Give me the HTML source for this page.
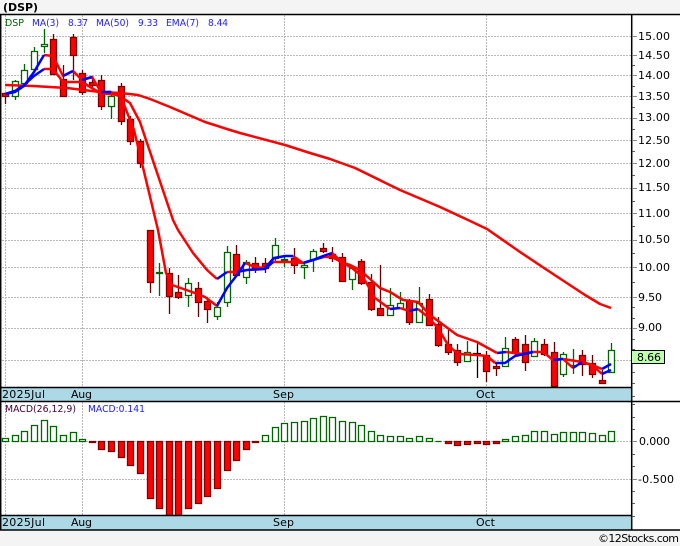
<!DOCTYPE html>
<html><head><meta charset="utf-8"><style>
html,body{margin:0;padding:0;background:#f4f4f4;width:680px;height:546px;overflow:hidden}
svg{display:block}
text{font-family:"DejaVu Sans",sans-serif;font-size:11px;fill:#000}
</style></head><body>
<svg width="680" height="546" viewBox="0 0 680 546" xmlns="http://www.w3.org/2000/svg">
<rect width="680" height="546" fill="#f4f4f4"/>
<rect x="0" y="14" width="680" height="516" fill="#fff"/>
<text x="3" y="11" style="font-size:11px;font-weight:bold" textLength="35" lengthAdjust="spacingAndGlyphs">(DSP)</text>

<!-- grid -->
<g stroke="#b8b8b8" stroke-width="1" stroke-dasharray="2 1" fill="none">
<path d="M2 36.5H636M2 55.5H636M2 75.5H636M2 96.5H636M2 118.5H636M2 140.5H636M2 163.5H636M2 188.5H636M2 213.5H636M2 240.5H636M2 267.5H636M2 297.5H636M2 328.5H636M2 360.5H636"/>
<path d="M2 441.5H636M2 479.5H636"/>
<path d="M5.5 15V387M82.5 15V387M284.5 15V387M486.5 15V387"/>
<path d="M5.5 402V515M82.5 402V515M284.5 402V515M486.5 402V515"/>
</g>

<!-- green wicks -->
<path fill="none" stroke="#006400" stroke-width="1.3" d="M15.5 80V100M24.5 64V83M34.5 47V69M44.5 29V53M111.5 93V119M159.5 263V296M188.5 278V307M217.5 302V320M227.5 246V307M246.5 260V284M275.5 238V263M284.5 256V267M304.5 262V279M313.5 249V272M352.5 267V290M390.5 288V316M400.5 292V308M419.5 287V322M467.5 341V362M505.5 337V366M534.5 338V357M563.5 352V377M573.5 349V374M611.5 343V373"/>
<!-- green bodies -->
<path fill="#fff" stroke="#006400" stroke-width="1.3" d="M12.5 81.5h6V96.5h-6zM21.5 70.5h6V83.5h-6zM31.5 51.5h6V69.5h-6zM41.5 44.5h6V46.5h-6zM108.5 96.5h6V106.5h-6zM156.5 272.5h6V273.5h-6zM185.5 283.5h6V295.5h-6zM214.5 307.5h6V316.5h-6zM224.5 252.5h6V302.5h-6zM243.5 262.5h6V277.5h-6zM272.5 245.5h6V258.5h-6zM281.5 259.5h6V260.5h-6zM301.5 265.5h6V267.5h-6zM310.5 251.5h6V259.5h-6zM349.5 268.5h6V279.5h-6zM387.5 305.5h6V315.5h-6zM397.5 303.5h6V308.5h-6zM416.5 303.5h6V322.5h-6zM464.5 352.5h6V361.5h-6zM502.5 348.5h6V366.5h-6zM531.5 341.5h6V356.5h-6zM560.5 354.5h6V374.5h-6zM570.5 365.5h6V366.5h-6zM608.5 350.5h6V372.5h-6z"/>
<!-- red wicks -->
<path fill="none" stroke="#660000" stroke-width="1.3" d="M5.5 93V104M53.5 34V74M63.5 65V97M73.5 34V80M82.5 70V95M92.5 76V87M101.5 75V110M121.5 83V125M130.5 116V145M140.5 139V168M150.5 230V293M169.5 268V314M178.5 275V299M198.5 282V317M207.5 297V323M236.5 245V275M255.5 257V273M265.5 258V273M294.5 248V274M323.5 243V253M332.5 247V262M342.5 253V282M361.5 259V285M371.5 274V311M380.5 265V316M409.5 299V325M429.5 294V325M438.5 317V347M448.5 330V355M457.5 344V366M486.5 351V382M496.5 362V376M515.5 337V355M525.5 335V371M544.5 339V356M554.5 342V387M582.5 350V376M592.5 355V378M602.5 370V383"/>
<!-- red bodies -->
<path fill="#f00" stroke="#800000" stroke-width="1.3" d="M2.5 93.5h6V96.5h-6zM50.5 39.5h6V74.5h-6zM60.5 79.5h6V96.5h-6zM70.5 37.5h6V55.5h-6zM79.5 73.5h6V92.5h-6zM89.5 82.5h6V85.5h-6zM98.5 80.5h6V106.5h-6zM118.5 86.5h6V121.5h-6zM127.5 119.5h6V141.5h-6zM137.5 141.5h6V163.5h-6zM147.5 230.5h6V282.5h-6zM166.5 273.5h6V296.5h-6zM175.5 292.5h6V297.5h-6zM195.5 288.5h6V302.5h-6zM204.5 301.5h6V309.5h-6zM233.5 254.5h6V275.5h-6zM252.5 263.5h6V268.5h-6zM262.5 263.5h6V268.5h-6zM291.5 258.5h6V265.5h-6zM320.5 248.5h6V251.5h-6zM329.5 254.5h6V258.5h-6zM339.5 257.5h6V281.5h-6zM358.5 261.5h6V283.5h-6zM368.5 282.5h6V309.5h-6zM377.5 308.5h6V315.5h-6zM406.5 301.5h6V322.5h-6zM426.5 299.5h6V325.5h-6zM435.5 324.5h6V345.5h-6zM445.5 344.5h6V352.5h-6zM454.5 350.5h6V362.5h-6zM483.5 355.5h6V371.5h-6zM493.5 366.5h6V368.5h-6zM512.5 339.5h6V353.5h-6zM522.5 344.5h6V362.5h-6zM541.5 344.5h6V354.5h-6zM551.5 352.5h6V386.5h-6zM579.5 355.5h6V364.5h-6zM589.5 363.5h6V374.5h-6zM599.5 380.5h6V383.5h-6z"/>
<!-- doji -->
<path fill="none" stroke="#000" stroke-width="1.3" d="M477.5 343V378M473 353.5H481"/>

<!-- MA50 -->
<polyline fill="none" stroke="#f00" stroke-width="2.5" stroke-linejoin="round" points="5,85 33,86 67,88 100,92 120,93 138,95 150,99 170,107 205,122 230,130 240,133 285,145 310,153 330,159 355,168 400,190 440,207 468,220 487,229 520,252 550,272 585,295 600,304 611,308"/>
<!-- red parts of MA3 + EMA -->
<g fill="none" stroke="#f00" stroke-width="2.5" stroke-linejoin="round">
<polyline points="44,55 53,56 63,76 73,71 82,80 92,77 101,92 111,92 121,97 134,130 158,230 166,273 172,285 192,292 205,297 217,306"/>
<polyline points="245,263 255,267 265,268 274,258"/>
<polyline points="293,256 303,263"/>
<polyline points="332,253 342,262 352,268 363,277 375,298 390,309"/>
<polyline points="400,308 409,311"/>
<polyline points="418,309 428,317 438,328 448,345 458,354 477,355 487,356 495,363"/>
<polyline points="533,352 543,352 553,360"/>
<polyline points="563,359 573,368"/>
<polyline points="582,362 592,365 602,374"/>
<polyline points="44,69 53,69 63,82 82,82 100,93 118,95 130,103 140,122 146,140 173,220 178,230 193,253 207,270 217,279"/>
<polyline points="227,272 237,272"/>
<polyline points="273,262 285,262 293,262 303,263"/>
<polyline points="323,257 332,257 343,263 350,265 360,270 380,288 390,292 403,300 418,302 430,315 457,335 477,342 497,353"/>
<polyline points="506,352 523,354"/>
<polyline points="563,359 582,362 592,365 602,369"/>
</g>
<!-- blue parts -->
<g fill="none" stroke="#00f" stroke-width="2.5" stroke-linejoin="round">
<polyline points="5,94 15,92 24,86 34,72 44,55"/>
<polyline points="63,76 73,71"/>
<polyline points="82,80 92,77"/>
<polyline points="101,92 111,92"/>
<polyline points="217,306 227,288 237,275 245,263"/>
<polyline points="265,268 274,258 285,256 293,256"/>
<polyline points="303,263 313,260 323,256 332,253"/>
<polyline points="390,309 400,308"/>
<polyline points="409,311 418,309"/>
<polyline points="495,363 505,363 515,356 524,354 533,352"/>
<polyline points="553,360 563,359"/>
<polyline points="573,368 582,362"/>
<polyline points="602,374 611,370"/>
<polyline points="5,94 15,91 24,85 34,76 44,69"/>
<polyline points="217,279 227,272"/>
<polyline points="237,272 247,270 265,269 273,262"/>
<polyline points="303,263 323,257"/>
<polyline points="497,353 506,352"/>
<polyline points="523,354 533,352"/>
<polyline points="553,360 563,359"/>
<polyline points="602,369 611,364"/>
</g>

<!-- MACD bars -->
<path fill="#fff" stroke="#006400" stroke-width="1.3" d="M2.5 438.5h6V441.5h-6zM12.5 435.5h6V441.5h-6zM21.5 431.5h6V441.5h-6zM31.5 425.5h6V441.5h-6zM41.5 420.5h6V441.5h-6zM50.5 426.5h6V441.5h-6zM60.5 435.5h6V441.5h-6zM70.5 432.5h6V441.5h-6zM79.5 439.5h6V441.5h-6zM262.5 435.5h6V441.5h-6zM272.5 427.5h6V441.5h-6zM281.5 423.5h6V441.5h-6zM291.5 422.5h6V441.5h-6zM301.5 421.5h6V441.5h-6zM310.5 418.5h6V441.5h-6zM320.5 416.5h6V441.5h-6zM329.5 417.5h6V441.5h-6zM339.5 421.5h6V441.5h-6zM349.5 422.5h6V441.5h-6zM358.5 425.5h6V441.5h-6zM368.5 431.5h6V441.5h-6zM377.5 435.5h6V441.5h-6zM387.5 436.5h6V441.5h-6zM397.5 436.5h6V441.5h-6zM406.5 438.5h6V441.5h-6zM416.5 436.5h6V441.5h-6zM426.5 438.5h6V441.5h-6zM435.5 441.5h6M502.5 439.5h6V441.5h-6zM512.5 436.5h6V441.5h-6zM522.5 435.5h6V441.5h-6zM531.5 431.5h6V441.5h-6zM541.5 431.5h6V441.5h-6zM551.5 434.5h6V441.5h-6zM560.5 432.5h6V441.5h-6zM570.5 432.5h6V441.5h-6zM579.5 432.5h6V441.5h-6zM589.5 433.5h6V441.5h-6zM599.5 435.5h6V441.5h-6zM608.5 431.5h6V441.5h-6z"/>
<path fill="#f00" stroke="#800000" stroke-width="1.3" d="M89.5 441.5h6V442.5h-6zM98.5 441.5h6V449.5h-6zM108.5 441.5h6V451.5h-6zM118.5 441.5h6V457.5h-6zM127.5 441.5h6V465.5h-6zM137.5 441.5h6V473.5h-6zM147.5 441.5h6V498.5h-6zM156.5 441.5h6V508.5h-6zM166.5 441.5h6V516h-6zM175.5 441.5h6V516h-6zM185.5 441.5h6V508.5h-6zM195.5 441.5h6V503.5h-6zM204.5 441.5h6V496.5h-6zM214.5 441.5h6V488.5h-6zM224.5 441.5h6V470.5h-6zM233.5 441.5h6V460.5h-6zM243.5 441.5h6V449.5h-6zM252.5 441.5h6V442.5h-6zM445.5 441.5h6V443.5h-6zM454.5 441.5h6V445.5h-6zM464.5 441.5h6V444.5h-6zM474.5 441.5h6V443.5h-6zM483.5 441.5h6V444.5h-6zM493.5 441.5h6V443.5h-6z"/>

<!-- bands -->
<rect x="1" y="388" width="631" height="13" fill="#add8e6"/>
<rect x="1" y="516" width="631" height="14" fill="#add8e6"/>
<!-- frames -->
<g stroke="#000" fill="none">
<path stroke-width="1.5" d="M0 14.5H680M0 387.5H632M0 401.5H680M0 515.5H632M0 530H680"/>
<path stroke-width="1.5" d="M.7 14V530M631.7 14V530"/>
</g>
<!-- ticks -->
<path stroke="#888" fill="none" d="M632 36.5h5M632 55.5h5M632 75.5h5M632 96.5h5M632 118.5h5M632 140.5h5M632 163.5h5M632 188.5h5M632 213.5h5M632 240.5h5M632 267.5h5M632 297.5h5M632 328.5h5M632 441.5h5M632 479.5h5"/>
<path stroke="#555" fill="none" d="M632 65.5h3M632 86.5h3M632 107.5h3M632 129.5h3M632 151.5h3M632 175.5h3M632 201.5h3M632 226.5h3M632 253.5h3M632 282.5h3M632 307.5h3M632 318.5h3M632 339.5h3M632 349.5h3M632 372.5h3M632 383.5h3M632 396.5h3M632 404.5h3M632 417.5h3M632 429.5h3M632 454.5h3M632 466.5h3M632 491.5h3M632 503.5h3M632 516.5h3"/>

<!-- legend -->
<g>
<text x="5" y="26" style="font-size:10px;fill:#006400" textLength="19" lengthAdjust="spacingAndGlyphs">DSP</text>
<text x="32" y="26" style="font-size:10px;fill:#2020ff" textLength="27" lengthAdjust="spacingAndGlyphs">MA(3)</text>
<text x="68" y="26" style="font-size:10px;fill:#2020ff" textLength="20" lengthAdjust="spacingAndGlyphs">8.37</text>
<text x="96" y="26" style="font-size:10px;fill:#2020ff" textLength="33" lengthAdjust="spacingAndGlyphs">MA(50)</text>
<text x="138" y="26" style="font-size:10px;fill:#2020ff" textLength="20" lengthAdjust="spacingAndGlyphs">9.33</text>
<text x="166" y="26" style="font-size:10px;fill:#2020ff" textLength="33" lengthAdjust="spacingAndGlyphs">EMA(7)</text>
<text x="208" y="26" style="font-size:10px;fill:#2020ff" textLength="20" lengthAdjust="spacingAndGlyphs">8.44</text>
<text x="5" y="412" style="font-size:10px;fill:#400030" textLength="71" lengthAdjust="spacingAndGlyphs">MACD(26,12,9)</text>
<text x="88" y="412" style="font-size:10px;fill:#2020ff" textLength="57" lengthAdjust="spacingAndGlyphs">MACD:0.141</text>
</g>

<!-- axis labels -->
<g>
<text x="638" y="40" textLength="32">15.00</text>
<text x="638" y="59" textLength="32">14.50</text>
<text x="638" y="79" textLength="32">14.00</text>
<text x="638" y="100" textLength="32">13.50</text>
<text x="638" y="121" textLength="32">13.00</text>
<text x="638" y="144" textLength="32">12.50</text>
<text x="638" y="167" textLength="32">12.00</text>
<text x="638" y="191" textLength="32">11.50</text>
<text x="638" y="217" textLength="32">11.00</text>
<text x="638" y="243" textLength="32">10.50</text>
<text x="638" y="271" textLength="32">10.00</text>
<text x="638" y="301" textLength="24">9.50</text>
<text x="638" y="331" textLength="24">9.00</text>
<text x="639" y="445" textLength="31">0.000</text>
<text x="638" y="483" textLength="36">-0.500</text>
</g>
<rect x="631.5" y="350.5" width="33" height="13" fill="#bfffb0" stroke="#000"/>
<text x="637" y="361" textLength="24">8.66</text>

<text x="2" y="398" textLength="43">2025Jul</text>
<text x="71" y="398" textLength="21">Aug</text>
<text x="273" y="398" textLength="21">Sep</text>
<text x="476" y="398" textLength="19">Oct</text>
<text x="2" y="526" textLength="43">2025Jul</text>
<text x="71" y="526" textLength="21">Aug</text>
<text x="273" y="526" textLength="21">Sep</text>
<text x="476" y="526" textLength="19">Oct</text>

<text x="598" y="542" textLength="81">©12Stocks.com</text>
</svg>
</body></html>
